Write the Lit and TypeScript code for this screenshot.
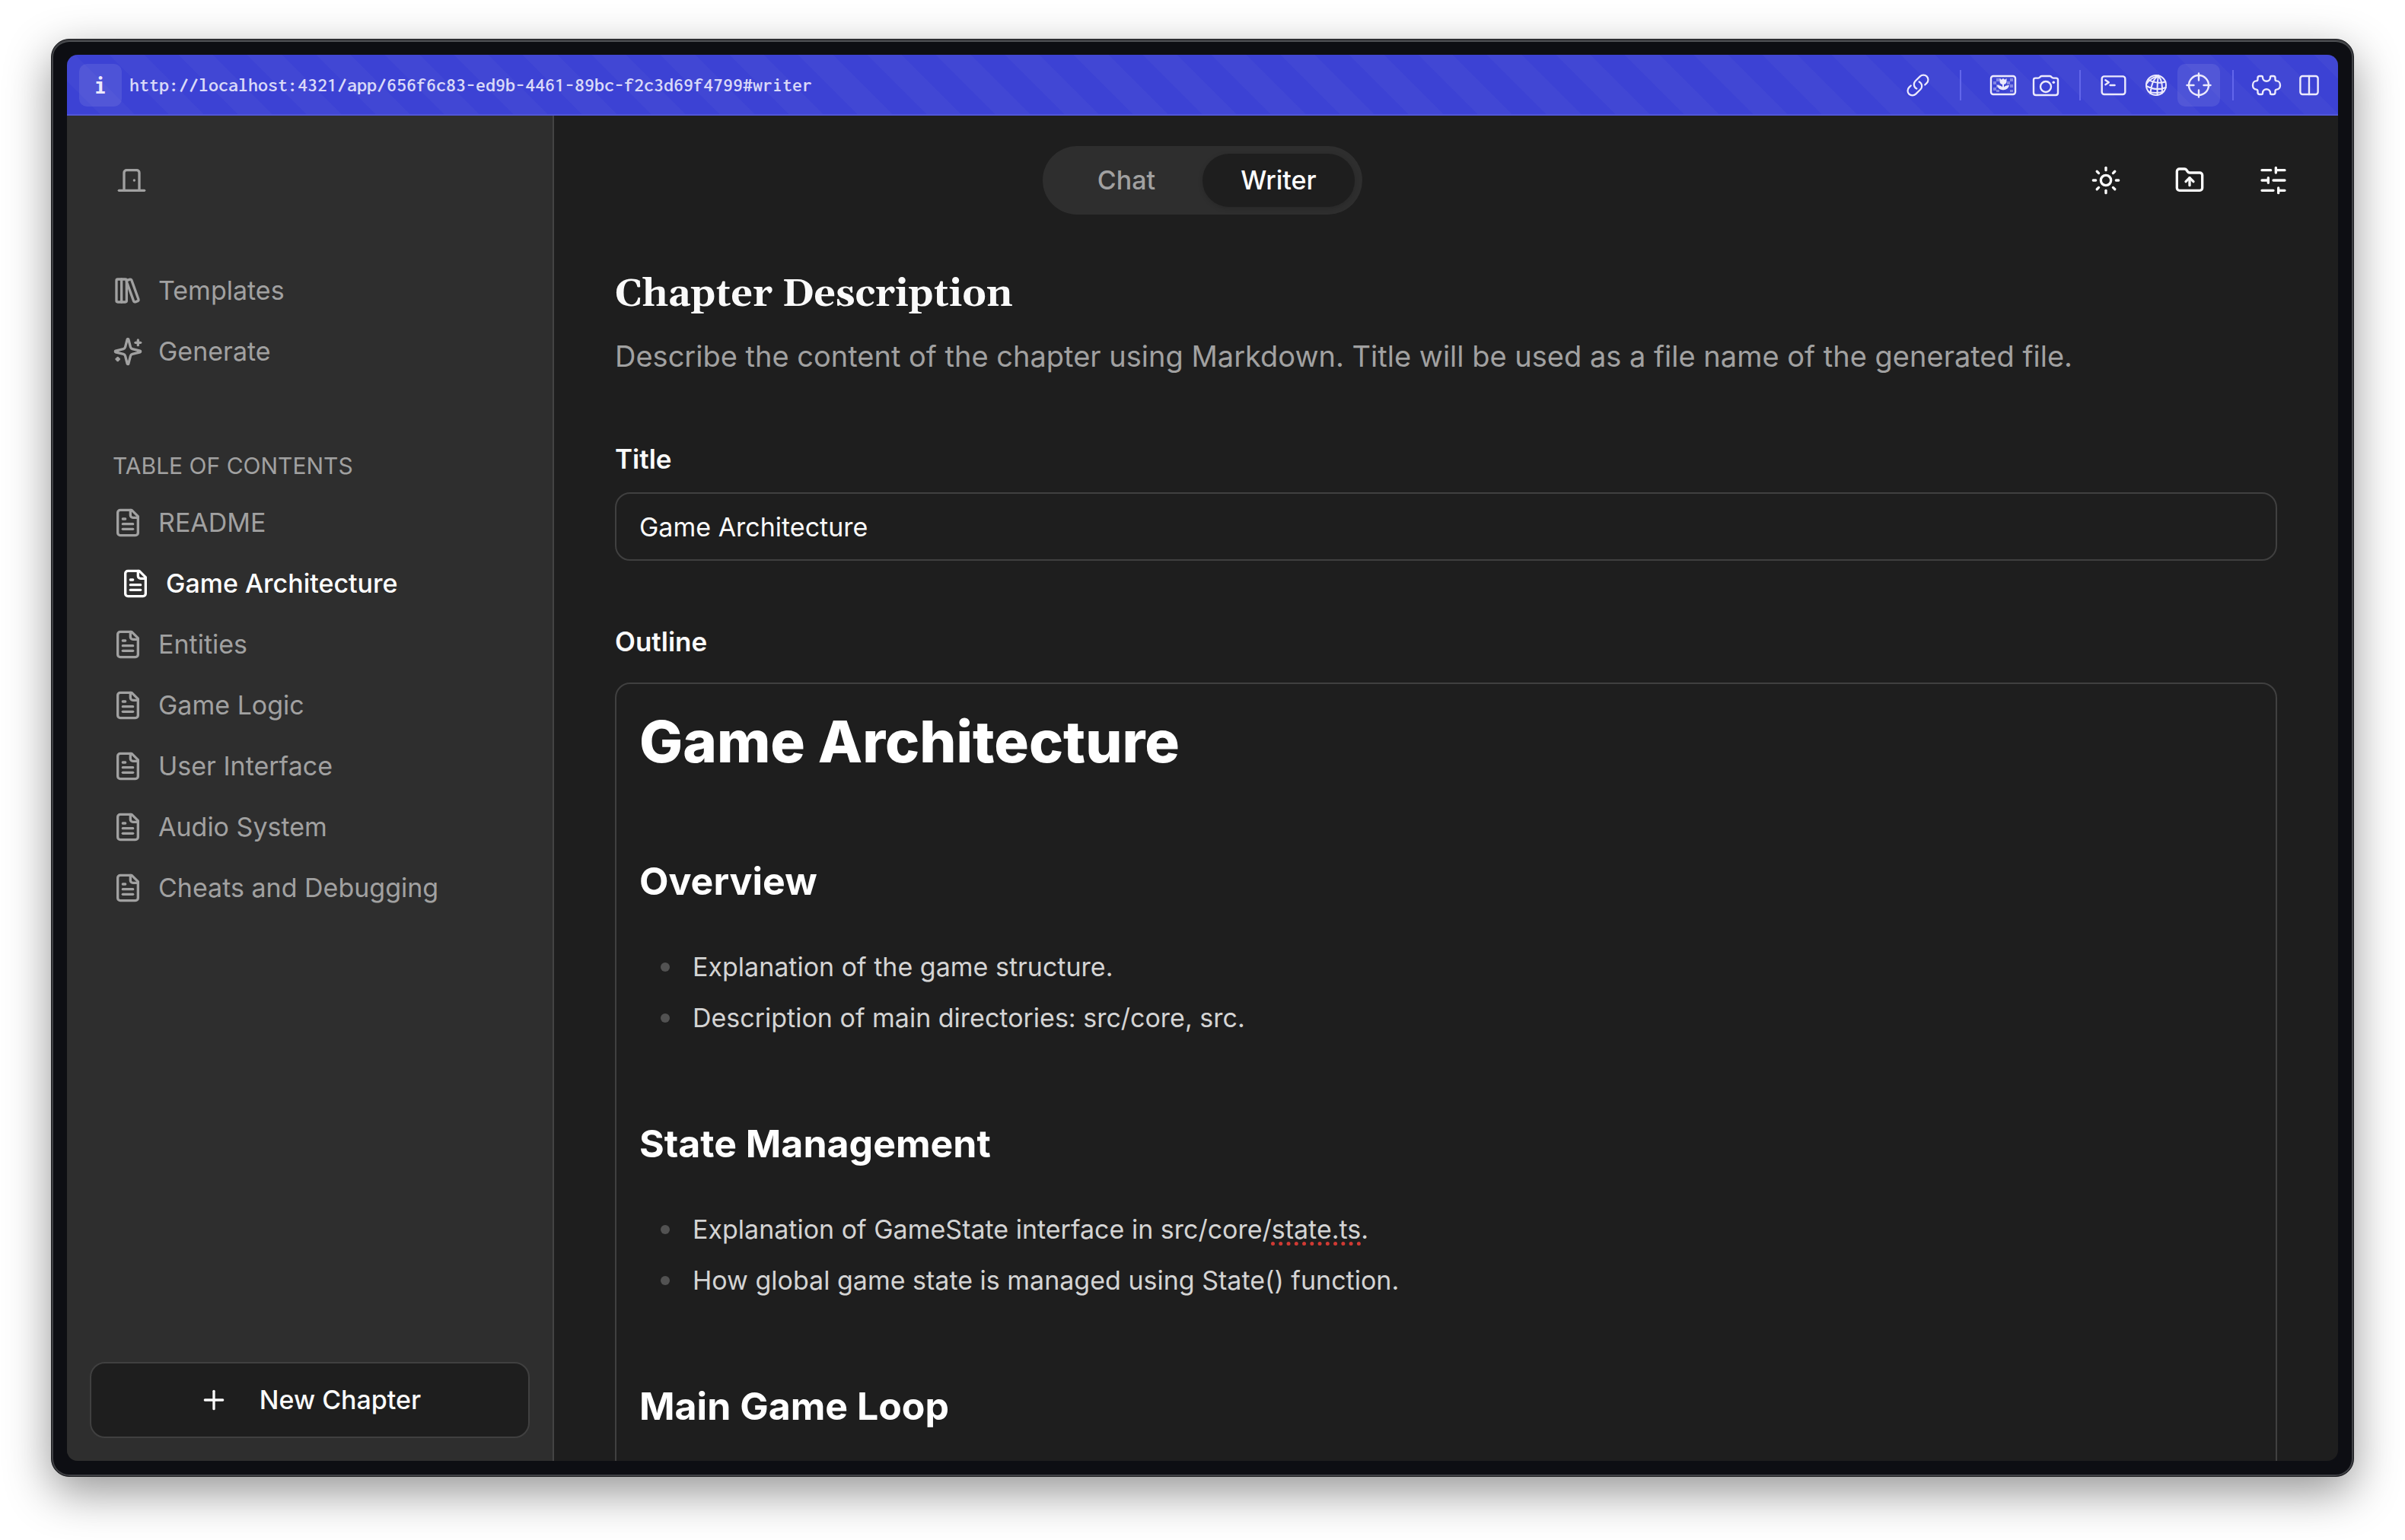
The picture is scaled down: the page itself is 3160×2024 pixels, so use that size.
import { LitElement, html, svg, css, nothing } from "lit";
import { customElement, state } from "lit/decorators.js";
import { classMap } from "lit/directives/class-map.js";

const outlineIcons = {
  door: svg`<path d="M18 20V6a2 2 0 0 0-2-2H8a2 2 0 0 0-2 2v14"/><path d="M2 20h20"/><path d="M14 12v.01"/>`,
  library: svg`<rect width="8" height="18" x="3" y="3" rx="1"/><path d="M7 3v18"/><path d="M20.4 18.9c.2.5-.1 1.1-.6 1.3l-1.9.7c-.5.2-1.1-.1-1.3-.6L11.1 5.1c-.2-.5.1-1.1.6-1.3l1.9-.7c.5-.2 1.1.1 1.3.6Z"/>`,
  sparkles: svg`<path d="M9.937 15.5A2 2 0 0 0 8.5 14.063l-6.135-1.582a.5.5 0 0 1 0-.962L8.5 9.936A2 2 0 0 0 9.937 8.5l1.582-6.135a.5.5 0 0 1 .963 0L14.063 8.5A2 2 0 0 0 15.5 9.937l6.135 1.581a.5.5 0 0 1 0 .964L15.5 14.063a2 2 0 0 0-1.437 1.437l-1.582 6.135a.5.5 0 0 1-.963 0z"/><path d="M20 3v4"/><path d="M22 5h-4"/><path d="M4 17v2"/><path d="M5 18H3"/>`,
  file: svg`<path d="M15 2H6a2 2 0 0 0-2 2v16a2 2 0 0 0 2 2h12a2 2 0 0 0 2-2V7Z"/><path d="M14 2v4a2 2 0 0 0 2 2h4"/><path d="M10 9H8"/><path d="M16 13H8"/><path d="M16 17H8"/>`,
  plus: svg`<path d="M5 12h14"/><path d="M12 5v14"/>`,
  sun: svg`<circle cx="12" cy="12" r="4"/><path d="M12 2v2"/><path d="M12 20v2"/><path d="m4.93 4.93 1.41 1.41"/><path d="m17.66 17.66 1.41 1.41"/><path d="M2 12h2"/><path d="M20 12h2"/><path d="m6.34 17.66-1.41 1.41"/><path d="m19.07 4.93-1.41 1.41"/>`,
  folder: svg`<path d="M20 20a2 2 0 0 0 2-2V8a2 2 0 0 0-2-2h-7.9a2 2 0 0 1-1.69-.9L9.6 3.9A2 2 0 0 0 7.93 3H4a2 2 0 0 0-2 2v13a2 2 0 0 0 2 2Z"/><path d="M12 10v6"/><path d="m9 13 3-3 3 3"/>`,
  sliders: svg`<path d="M21 4h-7M10 4H3M21 12h-9M8 12H3M21 20h-5M12 20H3M14 2v4M8 10v4M16 18v4"/>`,
};

type OutlineIcon = keyof typeof outlineIcons;

const icon = (name: OutlineIcon) => html`
  <svg class="icon" viewBox="0 0 24 24" aria-hidden="true">${outlineIcons[name]}</svg>
`;

/* Toolbar glyphs are drawn around the origin of a 40 unit square. */
const toolIcons = {
  link: svg`<g transform="scale(1.38) translate(-12 -12)" stroke-width="1.6"><path d="M13.19 8.688a4.5 4.5 0 0 1 1.242 7.244l-4.5 4.5a4.5 4.5 0 0 1-6.364-6.364l1.757-1.757m13.35-.622 1.757-1.757a4.5 4.5 0 0 0-6.364-6.364l-4.5 4.5a4.5 4.5 0 0 0 1.242 7.244"/></g>`,
  image: svg`
    <rect x="-16" y="-12" width="32" height="24" rx="3"/>
    <g class="tile">
      <path d="M-13 -5h4v4h-4zM-13 3h4v4h-4zM-9 -9h4v4h-4zM-9 -1h4v4h-4zM9 -9h4v4h-4zM9 -1h4v4h-4zM5 -5h4v4h-4zM9 6h4v3h-4zM-9 6h4v3h-4zM-5 -9h2v3h-2z"/>
    </g>
    <path class="solid" d="M-4.5 -9 L-2.3 -7.2 L0 -9 L2.3 -7.2 L4.5 -9 V-4.5 A4.5 4 0 0 1 1 -1 V2.6 Q3 -.2 8 0 Q7 5.6 1 6.2 H-1 Q-7 5.6 -8 0 Q-3 -.2 -1 2.6 V-1 A4.5 4 0 0 1 -4.5 -4.5Z"/>`,
  camera: svg`<path d="M-16 -7 Q-16 -9.4 -13.6 -9.4 H-10 Q-8.6 -9.4 -7.8 -10.4 L-7 -11.3 Q-6.3 -12 -5 -12 H5 Q6.3 -12 7 -11.3 L7.8 -10.4 Q8.6 -9.4 10 -9.4 H13.6 Q16 -9.4 16 -7 V10 Q16 13 13 13 H-13 Q-16 13 -16 10Z"/><circle cy="2" r="7"/><circle class="solid" cx="10.3" cy="-3.8" r="1.8"/>`,
  terminal: svg`<rect x="-15.3" y="-11.6" width="30.6" height="23.6" rx="3"/><path d="M-10.6 -6.8 L-6.2 -3.7 L-10.6 -.8M-4.4 0H1.6"/>`,
  globe: svg`<g stroke-width="2"><circle r="13"/><path d="M3 -12.6 Q-6 -7 -7.6 11M3 -12.6 Q1.2 -2 1.6 13M3 -12.6 Q9.5 -4 7.6 10.6M3 -12.6 Q-8 -9 -12.8 -1.5M-10.5 -7.5 Q0 -1 12.2 -4.5M-12.8 1 Q0 8 12.8 3M-9.8 8.6 Q0 11.5 9.6 8.6"/></g>`,
  target: svg`<circle r="13"/><path d="M0 -15.5V-6.5M0 15.5V6.5M-15.5 0H-6.5M15.5 0H6.5"/>`,
  puzzle: svg`<path d="M-11.5 -9.5Q-11.5 -12 -9 -12H-6.5Q-5 -12 -5 -10.2A5 5 0 0 0 5 -10.2Q5 -12 6.5 -12H9Q11.5 -12 11.5 -9.5V-8Q11.5 -5.6 13.4 -5.6A4.6 5.6 0 0 1 13.4 5.6Q11.5 5.6 11.5 8V9.5Q11.5 12 9 12H6.5Q5 12 5 10.2A5 5 0 0 0 -5 10.2Q-5 12 -6.5 12H-9Q-11.5 12 -11.5 9.5V8Q-11.5 5.6 -13.4 5.6A4.6 5.6 0 0 1 -13.4 -5.6Q-11.5 -5.6 -11.5 -8Z"/>`,
  split: svg`<rect x="-11.6" y="-12" width="23.2" height="24" rx="3"/><path d="M0 -12V12"/>`,
};

type ToolIcon = keyof typeof toolIcons;

interface Tool {
  name: ToolIcon;
  label: string;
  active?: boolean;
}

const toolGroups: Tool[][] = [
  [{ name: "link", label: "Copy link" }],
  [{ name: "image", label: "Save image" }, { name: "camera", label: "Take screenshot" }],
  [
    { name: "terminal", label: "Open console" },
    { name: "globe", label: "Network" },
    { name: "target", label: "Inspect", active: true },
  ],
  [{ name: "puzzle", label: "Extensions" }, { name: "split", label: "Split view" }],
];

const chapters = [
  "README",
  "Game Architecture",
  "Entities",
  "Game Logic",
  "User Interface",
  "Audio System",
  "Cheats and Debugging",
];

@customElement("browser-toolbar")
class BrowserToolbar extends LitElement {
  static styles = css`
    :host {
      display: flex;
      align-items: center;
      box-sizing: border-box;
      height: 80px;
      padding: 0 10px 0 16px;
      background: repeating-linear-gradient(45deg, #3c42d4 0 32px, #4147d4 32px 64px);
      box-shadow: inset 0 -2px 0 #5156d9;
      color: #eceafc;
      font-family: "Inconsolata", "DejaVu Sans Mono", monospace;
    }
    button {
      display: grid;
      place-items: center;
      width: 56px;
      height: 56px;
      padding: 0;
      border: 0;
      border-radius: 10px;
      background: none;
      color: inherit;
      font: inherit;
    }
    .raised {
      background: rgba(255, 255, 255, 0.09);
    }
    .info {
      font-size: 34px;
      font-weight: 700;
      line-height: 56px;
    }
    .url {
      flex: 1;
      padding-left: 10px;
      color: #d9d9f8;
      font-size: 26px;
      font-weight: 600;
      line-height: 40px;
    }
    .group {
      display: flex;
      align-items: center;
    }
    .group + .group {
      margin-left: 16px;
      padding-left: 17px;
      background: linear-gradient(#6266ea, #6266ea) left center / 2px 40px no-repeat;
    }
    .group:nth-of-type(1) + .group {
      margin-left: 27px;
      padding-left: 29px;
    }
    svg {
      width: 40px;
      height: 40px;
      fill: none;
      stroke: currentColor;
      stroke-width: 2.4;
      stroke-linecap: round;
      stroke-linejoin: round;
    }
    .solid {
      fill: currentColor;
      stroke: none;
    }
    .tile {
      fill: currentColor;
      stroke: none;
      opacity: 0.4;
    }
  `;

  render() {
    return html`
      <button class="info raised" aria-label="Page information">i</button>
      <span class="url">http://localhost:4321/app/656f6c83-ed9b-4461-89bc-f2c3d69f4799#writer</span>
      ${toolGroups.map(
        (group) => html`
          <div class="group">
            ${group.map(
              (tool) => html`
                <button class=${classMap({ raised: !!tool.active })} aria-label=${tool.label}>
                  <svg viewBox="-20 -20 40 40" aria-hidden="true">${toolIcons[tool.name]}</svg>
                </button>
              `
            )}
          </div>
        `
      )}
    `;
  }
}

@customElement("app-root")
class AppRoot extends LitElement {
  @state() private chapter = "Game Architecture";
  @state() private view = "Writer";

  static styles = css`
    :host {
      display: block;
      box-sizing: border-box;
      height: 100vh;
      padding: 51px 67px 83px;
      background: #fff;
      color: #fafafa;
      font-family: "Inter", "Liberation Sans", sans-serif;
      font-size: 34px;
      line-height: 40px;
    }
    * {
      box-sizing: border-box;
    }
    button,
    input {
      font: inherit;
      color: inherit;
    }
    .icon {
      flex: none;
      width: 40px;
      height: 40px;
      fill: none;
      stroke: currentColor;
      stroke-width: 2;
      stroke-linecap: round;
      stroke-linejoin: round;
    }
    .frame {
      height: 100%;
      padding: 20px;
      border: 1px solid #1b1c1f;
      border-radius: 24px;
      background: #0d0e13;
      box-shadow:
        inset 0 0 0 2px #404145,
        inset 0 2px 0 1px #54575a,
        0 20px 60px rgba(0, 0, 0, 0.42);
    }
    .screen {
      display: flex;
      flex-direction: column;
      height: 100%;
      overflow: hidden;
      border-radius: 14px;
      background: #1e1e1e;
    }
    .workspace {
      flex: 1;
      min-height: 0;
      display: grid;
      grid-template-columns: 640px minmax(0, 1fr);
      grid-template-rows: auto minmax(0, 1fr);
    }

    .sidebar {
      grid-area: 1 / 1 / -1 / 2;
      display: flex;
      flex-direction: column;
      padding: 60px 30px 30px;
      border-right: 2px solid #444;
      background: #2e2e2e;
      color: #a1a1a1;
    }
    .leave {
      display: grid;
      place-items: center;
      width: 50px;
      height: 50px;
      margin: 0 30px 80px;
      padding: 0;
      border: 0;
      background: none;
    }
    .links {
      display: flex;
      flex-direction: column;
      margin: 0;
      padding: 0 30px;
      list-style: none;
    }
    .link {
      display: flex;
      align-items: center;
      gap: 20px;
      height: 80px;
      color: inherit;
      text-decoration: none;
    }
    .link.current {
      padding-left: 10px;
      color: #fff;
      font-weight: 500;
    }
    .caption {
      margin: 90px 30px 15px;
      font-size: 30px;
      font-weight: 400;
      line-height: 40px;
      text-transform: uppercase;
    }
    .new {
      display: flex;
      align-items: center;
      justify-content: center;
      gap: 40px;
      height: 100px;
      margin-top: auto;
      border: 2px solid #404040;
      border-radius: 20px;
      background: #1e1e1e;
      color: #fafafa;
      font-weight: 500;
    }

    .header {
      grid-area: 1 / 1 / 2 / -1;
      display: grid;
      grid-template-columns: 1fr auto 1fr;
      align-items: center;
      padding: 40px;
      z-index: 1;
      pointer-events: none;
    }
    .tabs {
      grid-column: 2;
      display: flex;
      padding: 10px;
      border-radius: 45px;
      background: #2e2e2e;
      pointer-events: auto;
    }
    .tab {
      width: 200px;
      height: 70px;
      padding: 0;
      border: 0;
      border-radius: 35px;
      background: none;
      color: #a1a1a1;
      font-weight: 500;
    }
    .tab.current {
      background: #1e1e1e;
      color: #fff;
      box-shadow: 0 2px 6px rgba(0, 0, 0, 0.15);
    }
    .actions {
      display: flex;
      justify-content: flex-end;
      gap: 20px;
      pointer-events: auto;
    }
    .action {
      display: grid;
      place-items: center;
      width: 90px;
      height: 90px;
      padding: 0;
      border: 0;
      background: none;
    }

    .content {
      grid-area: 2 / 2;
      display: flex;
      flex-direction: column;
      min-height: 0;
      overflow: hidden;
      padding: 36px 80px 0;
    }
    .heading {
      margin: 0;
      font-family: "Gelasio", "DejaVu Serif Condensed", "DejaVu Serif", serif;
      font-size: 50px;
      font-weight: 700;
      line-height: 60px;
    }
    .hint {
      margin: 20px 0 85px;
      color: #a1a1a1;
      font-size: 38px;
      line-height: 60px;
    }
    .label {
      font-size: 35px;
      font-weight: 600;
    }
    .field {
      flex: none;
      width: 100%;
      height: 90px;
      margin: 24px 0 86px;
      padding: 0 30px;
      border: 2px solid #404040;
      border-radius: 20px;
      outline: 0;
      background: transparent;
    }
    .editor {
      flex: 1 0 auto;
      margin-top: 34px;
      padding: 30px 30px 120px;
      border: 2px solid #404040;
      border-radius: 20px;
      color: #d4d4d4;
      outline: 0;
    }
    .editor h1 {
      margin: 0 0 105px;
      color: #fff;
      font-size: 76px;
      font-weight: 800;
      line-height: 90px;
    }
    .editor h2 {
      margin: 98px 0 45px;
      color: #fff;
      font-size: 50px;
      font-weight: 700;
      line-height: 68px;
    }
    .editor ul {
      margin: 0;
      padding: 0;
      list-style: none;
    }
    .editor li {
      display: flex;
      align-items: center;
      gap: 30px;
      padding-left: 28px;
      line-height: 67px;
    }
    .editor li::before {
      content: "";
      width: 12px;
      height: 12px;
      border-radius: 50%;
      background: #525252;
    }
    .misspelt {
      text-decoration: underline dotted #d03a33 5px;
      text-decoration-skip-ink: none;
      text-underline-offset: 4px;
    }
  `;

  private renderChapter(name: string) {
    const current = name === this.chapter;
    return html`
      <li>
        <a
          class=${classMap({ link: true, current })}
          href="#writer"
          aria-current=${current ? "page" : nothing}
          @click=${() => (this.chapter = name)}
          >${icon("file")}${name}</a
        >
      </li>
    `;
  }

  render() {
    return html`
      <div class="frame">
        <div class="screen">
          <browser-toolbar></browser-toolbar>
          <div class="workspace">
            <nav class="sidebar">
              <button class="leave" aria-label="Leave project">${icon("door")}</button>
              <ul class="links">
                <li><a class="link" href="#templates">${icon("library")}Templates</a></li>
                <li><a class="link" href="#generate">${icon("sparkles")}Generate</a></li>
              </ul>
              <h2 class="caption">Table of contents</h2>
              <ul class="links">
                ${chapters.map((name) => this.renderChapter(name))}
              </ul>
              <button class="new">${icon("plus")}New Chapter</button>
            </nav>

            <header class="header">
              <div class="tabs">
                ${["Chat", "Writer"].map(
                  (name) => html`
                    <button
                      class=${classMap({ tab: true, current: name === this.view })}
                      aria-pressed=${name === this.view}
                      @click=${() => (this.view = name)}
                    >
                      ${name}
                    </button>
                  `
                )}
              </div>
              <div class="actions">
                <button class="action" aria-label="Toggle theme">${icon("sun")}</button>
                <button class="action" aria-label="Export to folder">${icon("folder")}</button>
                <button class="action" aria-label="Settings">${icon("sliders")}</button>
              </div>
            </header>

            <main class="content">
              <h1 class="heading">Chapter Description</h1>
              <p class="hint">
                Describe the content of the chapter using Markdown. Title will be used as a file
                name of the generated file.
              </p>
              <label class="label" for="title">Title</label>
              <input class="field" id="title" type="text" value="Game Architecture" />
              <span class="label" id="outline-label">Outline</span>
              <div
                class="editor"
                role="textbox"
                aria-multiline="true"
                aria-labelledby="outline-label"
                contenteditable="true"
                spellcheck="false"
              >
                <h1>Game Architecture</h1>
                <h2>Overview</h2>
                <ul>
                  <li><span>Explanation of the game structure.</span></li>
                  <li><span>Description of main directories: src/core, src.</span></li>
                </ul>
                <h2>State Management</h2>
                <ul>
                  <li>
                    <span
                      >Explanation of GameState interface in src/core/<span class="misspelt"
                        >state.ts</span
                      >.</span
                    >
                  </li>
                  <li><span>How global game state is managed using State() function.</span></li>
                </ul>
                <h2>Main Game Loop</h2>
              </div>
            </main>
          </div>
        </div>
      </div>
    `;
  }
}
